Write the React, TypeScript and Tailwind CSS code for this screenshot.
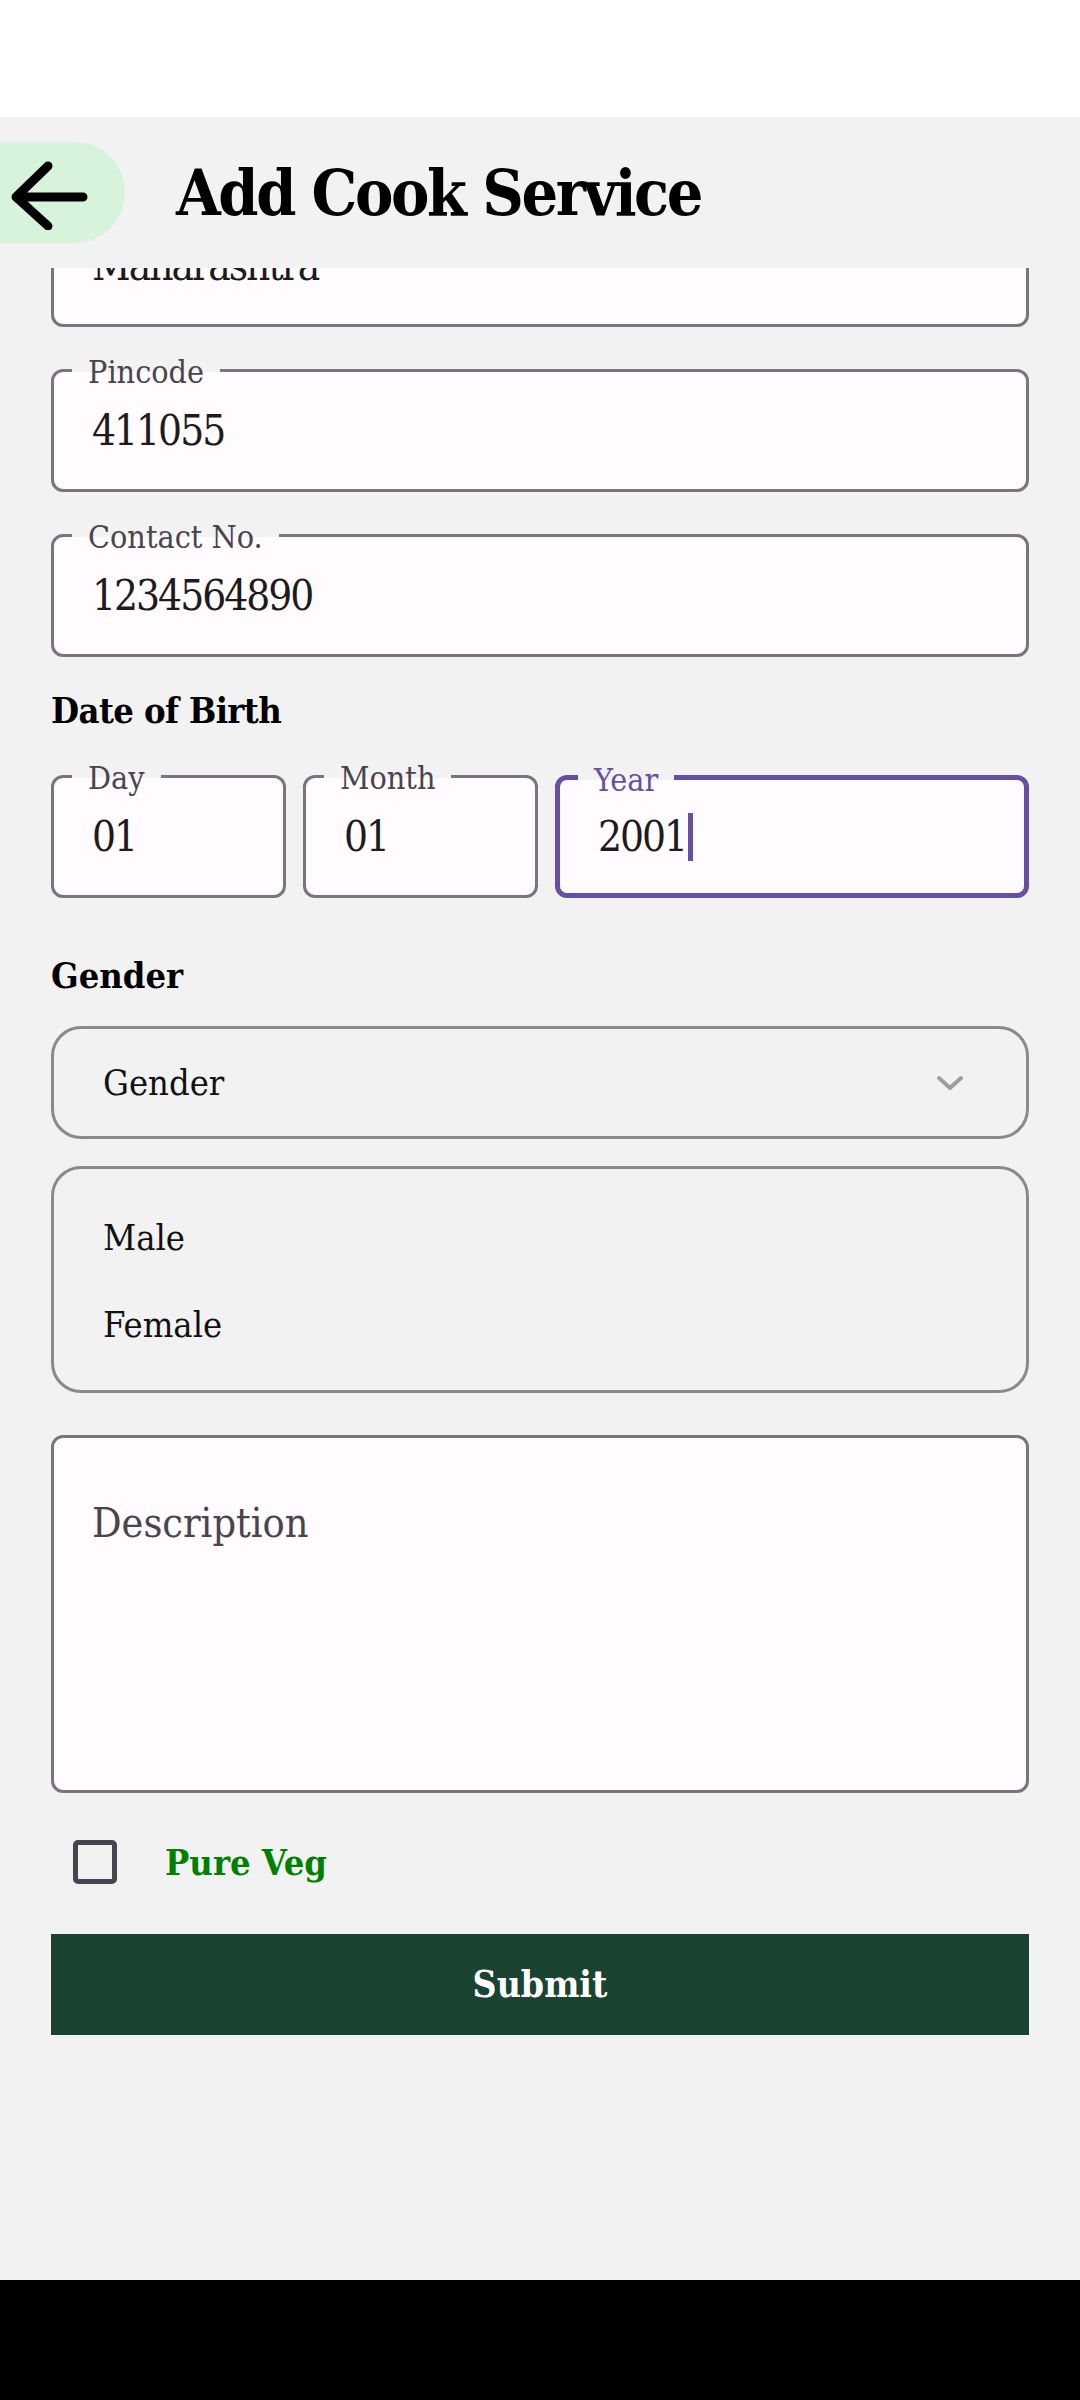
import React from 'react';

const slab = { fontFamily: '"DejaVu Serif Condensed", "DejaVu Serif", serif' };

function OutlinedField({ label, value, className = "", focused = false, caret = false }: any) {
  return (
    <div
      className={`relative h-[123px] rounded-[12px] bg-[#fffbfe] flex items-center pl-[38px] ${
        focused ? 'border-[5px] border-[#6750a4]' : 'border-[3px] border-[#79747e]'
      } ${className}`}
    >
      {label && (
        <span
          className={`absolute left-[18px] top-0 -translate-y-1/2 px-[16px] bg-linear-to-b from-[#f2f2f2] from-50% to-[#fffbfe] to-50% text-[32px] leading-[38px] ${
            focused ? 'text-[#6750a4]' : 'text-[#49454f]'
          }`}
        >
          {label}
        </span>
      )}
      <span className="text-[42px] leading-[52px] tracking-[-2px] text-[#1d1b20] flex items-center">
        {value}
        {caret && <span className="inline-block w-[5px] h-[48px] bg-[#6750a4] ml-[2px]" />}
      </span>
    </div>
  );
}

export default function App() {
  return (
    <div className="w-[1080px] h-[2400px] bg-[#f2f2f2] flex flex-col overflow-hidden" style={slab}>
      {/* status bar */}
      <div className="h-[117px] bg-white shrink-0" />

      {/* top app bar */}
      <div className="h-[151px] shrink-0 flex items-center bg-[#f2f2f2] z-10">
        <div className="w-[125px] h-[101px] bg-[#d7f3dc] rounded-r-full flex items-center pl-[10px]">
          <svg width="80" height="74" viewBox="0 0 80 74" fill="none">
            <path d="M38 10 L6 41 L38 70 M6 41 H73" stroke="#000" strokeWidth="9" strokeLinecap="round" strokeLinejoin="round" />
          </svg>
        </div>
        <h1 className="ml-[51px] text-[64px] font-bold tracking-[-2.4px] text-black leading-none">Add Cook Service</h1>
      </div>

      {/* form, scrolled */}
      <div className="flex-1 overflow-hidden">
        <div className="px-[51px] flex flex-col">
          <OutlinedField value="Maharashtra" className="-mt-[64px]" />
          <OutlinedField label="Pincode" value="411055" className="mt-[42px]" />
          <OutlinedField label="Contact No." value="1234564890" className="mt-[42px]" />

          <h2 className="mt-[27px] h-[52px] flex items-center text-[36px] font-bold tracking-[-0.6px] text-black">Date of Birth</h2>
          <div className="mt-[39px] flex gap-[17px]">
            <OutlinedField label="Day" value="01" className="w-[235px]" />
            <OutlinedField label="Month" value="01" className="w-[235px]" />
            <OutlinedField label="Year" value="2001" className="flex-1" focused caret />
          </div>

          <h2 className="mt-[51px] h-[52px] flex items-center text-[36px] font-bold text-black">Gender</h2>
          <div className="mt-[25px] h-[113px] rounded-[30px] border-[3px] border-[#8a8a8a] flex items-center justify-between pl-[49px] pr-[62px]">
            <span className="text-[36px] text-[#111]">Gender</span>
            <svg width="28" height="16" viewBox="0 0 28 16" fill="none">
              <path d="M3 3 L14 13 L25 3" stroke="#9e9e9e" strokeWidth="4" strokeLinecap="round" strokeLinejoin="round" />
            </svg>
          </div>
          <div className="mt-[27px] h-[227px] rounded-[30px] border-[3px] border-[#8a8a8a] pt-[25px] flex flex-col">
            <div className="h-[87px] flex items-center pl-[49px] text-[36px] text-[#111]">Male</div>
            <div className="h-[87px] flex items-center pl-[49px] text-[36px] text-[#111]">Female</div>
          </div>

          <div className="mt-[42px] h-[358px] rounded-[12px] border-[3px] border-[#79747e] bg-[#fffbfe] pl-[38px] pt-[57px]">
            <span className="block text-[41px] leading-[56px] text-[#49454f]">Description</span>
          </div>

          <div className="mt-[39px] h-[60px] flex items-center">
            <div className="ml-[22px] w-[44px] h-[44px] rounded-[5px] border-[5px] border-[#49454f]" />
            <span className="ml-[48px] text-[36px] font-bold text-[#008000]">Pure Veg</span>
          </div>

          <button className="mt-[42px] h-[101px] w-full bg-[#1b4332] text-white text-[37px] font-bold">
            Submit
          </button>
        </div>
      </div>

      {/* nav bar */}
      <div className="h-[120px] bg-black shrink-0" />
    </div>
  );
}
